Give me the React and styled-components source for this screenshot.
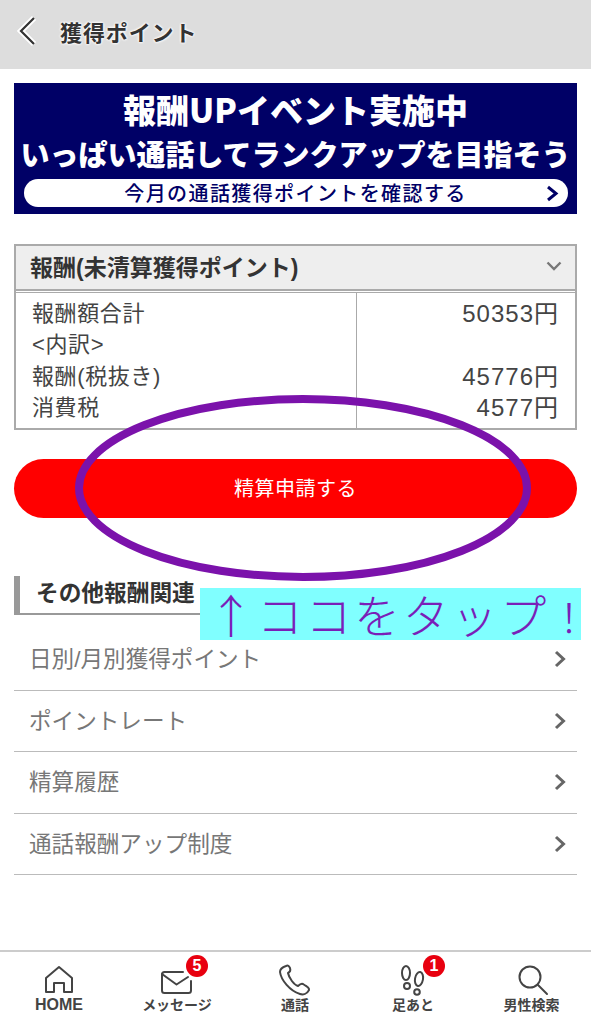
import React from "react";
import styled, { createGlobalStyle } from "styled-components";

const Global = createGlobalStyle`
  html, body { margin: 0; padding: 0; background: #fff; }
  body { font-family: "Liberation Sans", "Noto Sans CJK JP", sans-serif; }
  * { box-sizing: border-box; }
`;
const Page = styled.div`
  position: relative; width: 591px; height: 1024px; overflow: hidden; background: #fff;
  display: flex; flex-direction: column;
`;
const Header = styled.header`
  height: 69px; background: #dddddd; display: flex; align-items: center; padding: 0 0 7px 13px; gap: 20px;
`;
const BackIcon = styled.svg`
  width: 27px; height: 36px; flex: none;
`;
const Title = styled.h1`
  margin: 0; font-size: 22px; font-weight: 700; color: #333; letter-spacing: 0.9px;
  text-shadow: 0 0 3px #fff, 0 0 3px #fff, 0 0 2px #fff;
`;
const Banner = styled.div`
  margin: 14px 14px 0; height: 131px; background: #000066; color: #fff; padding-top: 4px;
  display: flex; flex-direction: column; align-items: center; font-weight: 900;
  font-family: "Noto Sans CJK JP", "Liberation Sans", sans-serif;
`;
const BannerLine = styled.div`
  font-size: ${p => p.$size}px; line-height: ${p => p.$lh}px; white-space: nowrap;
`;
const BannerPill = styled.div`
  width: 544px; height: 28px; margin-top: 4px; border-radius: 14px; background: #fff; color: #000066;
  font-size: 20px; font-weight: 500; line-height: 28px; display: flex; align-items: center; justify-content: center;
  position: relative; letter-spacing: 1.4px;
`;
const PillArrow = styled.svg`
  position: absolute; right: 9px; top: 6px; width: 14px; height: 17px;
`;
const Accordion = styled.section`
  margin: 30px 14px 0; border: 2px solid #aaa; height: 186px; display: flex; flex-direction: column;
`;
const AccHead = styled.div`
  height: 45px; background: #eeeeee; display: flex; align-items: center; justify-content: space-between;
  padding: 0 13px 3px 14px; font-size: 23px; font-weight: 700; color: #333; flex: none; border-bottom: 2px solid #aaa;
`;
const AccChevron = styled.svg`
  width: 16px; height: 10px;
`;
const AccBody = styled.div`
  flex: 1; display: grid; grid-template-columns: 340px 1fr; margin-top: 1px; border-top: 1px solid #aaa;
`;
const AccCol = styled.div`
  padding: 5px 16px 0; line-height: 31.3px; color: #444; white-space: pre-line;
  font-size: ${p => p.$right ? 24 : 22}px;
  letter-spacing: ${p => p.$right ? 1 : 0.6}px;
  text-align: ${p => p.$right ? "right" : "left"};
  border-left: ${p => p.$right ? "1px solid #aaa" : "none"};
`;
const PayButton = styled.button`
  margin: 29px 14px 0; height: 59px; border: 0; border-radius: 30px; background: #ff0000; color: #fff;
  font-family: inherit; font-size: 20px; letter-spacing: 0.5px; padding: 0 0 3px; flex: none;
`;
const Section = styled.div`
  margin: 58px 14px 0; height: 39px; border-left: 6px solid #999; border-bottom: 2px solid #999;
  padding-left: 16px; font-size: 22.7px; font-weight: 700; color: #333; line-height: 35px;
`;
const List = styled.ul`
  list-style: none; margin: 14px 14px 0; padding: 0;
`;
const Row = styled.li`
  height: 61.5px; border-bottom: 1px solid #bbb; display: flex; align-items: center; justify-content: space-between;
  padding: 0 11px 3px 15px; font-size: 22.6px; color: #777;
`;
const RowChevron = styled.svg`
  width: 12px; height: 18px; flex: none; margin-top: 3px;
`;
const Nav = styled.nav`
  position: absolute; left: 0; right: 0; bottom: 0; height: 74px; background: #fff; border-top: 2px solid #ccc;
  display: grid; grid-template-columns: 118px 118px 118px 118px 119px;
`;
const NavItem = styled.div`
  position: relative; display: flex; flex-direction: column; align-items: center; justify-content: flex-end;
  padding-bottom: 11px; font-size: ${p => p.$size || 14}px; font-weight: 700; color: #444; line-height: 16px; gap: 1px;
`;
const NavIcon = styled.svg`
  width: 36px; height: 32px; fill: none; stroke: #444; stroke-width: 2; stroke-linecap: round; stroke-linejoin: round;
`;
const Badge = styled.span`
  position: absolute; top: 3px; left: ${p => p.$left}px; width: 22px; height: 22px; border-radius: 50%;
  background: #e8000f; color: #fff; font-size: 16px; font-weight: 700; line-height: 21px; text-align: center;
`;
const Ellipse = styled.svg`
  position: absolute; left: 70px; top: 392px; width: 466px; height: 192px; overflow: visible;
`;
const Callout = styled.div`
  position: absolute; left: 200px; top: 588px; width: 381px; height: 52px; background: #80ffff; color: #7a1fb8;
  font-family: "Noto Sans CJK JP", sans-serif; font-size: 46px; line-height: 50px; white-space: nowrap;
  padding-left: 8px; letter-spacing: 2.7px; font-weight: 300;
`;
const CalloutMark = styled.span`
  font-size: 40px; letter-spacing: 0;
`;

const Chevron = () => (
  <RowChevron viewBox="0 0 12 18"><path d="M2 2l7.500 7-7.500 7" fill="none" stroke="#666" strokeWidth="3" /></RowChevron>
);

const rows = ["日別/月別獲得ポイント", "ポイントレート", "精算履歴", "通話報酬アップ制度"];

export default function App() {
  return (
    <Page>
      <Global />
      <Header>
        <BackIcon viewBox="0 0 27 36">
          <path d="M21 5L8 18l13 13" fill="none" stroke="#fff" strokeWidth="6" />
          <path d="M21 5L8 18l13 13" fill="none" stroke="#333" strokeWidth="2.200" />
        </BackIcon>
        <Title>獲得ポイント</Title>
      </Header>
      <Banner>
        <BannerLine $size={33} $lh={44}>報酬UPイベント実施中</BannerLine>
        <BannerLine $size={29} $lh={44}>いっぱい通話してランクアップを目指そう</BannerLine>
        <BannerPill>
          今月の通話獲得ポイントを確認する
          <PillArrow viewBox="0 0 14 17"><path d="M3 2l8 6.500-8 6.500" fill="none" stroke="#000066" strokeWidth="3" /></PillArrow>
        </BannerPill>
      </Banner>
      <Accordion>
        <AccHead>
          報酬(未清算獲得ポイント)
          <AccChevron viewBox="0 0 16 10"><path d="M1.500 1.500L8 8l6.500-6.500" fill="none" stroke="#777" strokeWidth="2.400" /></AccChevron>
        </AccHead>
        <AccBody>
          <AccCol>{"報酬額合計\n<内訳>\n報酬(税抜き)\n消費税"}</AccCol>
          <AccCol $right>{"50353円\n\n45776円\n4577円"}</AccCol>
        </AccBody>
      </Accordion>
      <PayButton>精算申請する</PayButton>
      <Section>その他報酬関連</Section>
      <List>
        {rows.map(r => <Row key={r}>{r}<Chevron /></Row>)}
      </List>
      <Nav>
        <NavItem $size={16}>
          <NavIcon viewBox="0 0 36 32"><path d="M5 28V14L18 3l13 11v14h-8v-9h-10v9z" /></NavIcon>
          HOME
        </NavItem>
        <NavItem>
          <NavIcon viewBox="0 0 36 32"><path d="M6 8h18M32 17v9.500a2.500 2.500 0 0 1-2.500 2.500h-24A2.500 2.500 0 0 1 3 26.500V10.500A2.500 2.500 0 0 1 5.500 8" /><path d="M3 10l14.500 10.500L29 13" /></NavIcon>
          メッセージ
          <Badge $left={68}>5</Badge>
        </NavItem>
        <NavItem>
          <NavIcon viewBox="0 0 36 32"><path d="M9 2c-3 1-6 3-6 6 1 8 10 19 20 22 3 1 7 0 9-4 .5-2-1-3-6-6-2-1-3 0-5 2-4-1-9-8-10-13 2-1 3-2 2-5-1-2-2-3-4-2z" /></NavIcon>
          通話
        </NavItem>
        <NavItem>
          <NavIcon viewBox="0 0 36 32"><ellipse cx="11" cy="9" rx="4" ry="7" /><circle cx="12" cy="22" r="3" /><ellipse cx="24" cy="15" rx="4" ry="7" transform="rotate(10 24 15)" /><circle cx="22" cy="28" r="2.800" /></NavIcon>
          足あと
          <Badge $left={69}>1</Badge>
        </NavItem>
        <NavItem>
          <NavIcon viewBox="0 0 36 32"><circle cx="16" cy="13" r="10.500" /><path d="M24 21l9 9" /></NavIcon>
          男性検索
        </NavItem>
      </Nav>
      <Ellipse viewBox="0 0 466 192">
        <ellipse cx="233" cy="96" rx="224" ry="89" fill="none" stroke="#7b12ab" strokeWidth="8" />
      </Ellipse>
      <Callout>↑ココをタップ<CalloutMark>！</CalloutMark></Callout>
    </Page>
  );
}
